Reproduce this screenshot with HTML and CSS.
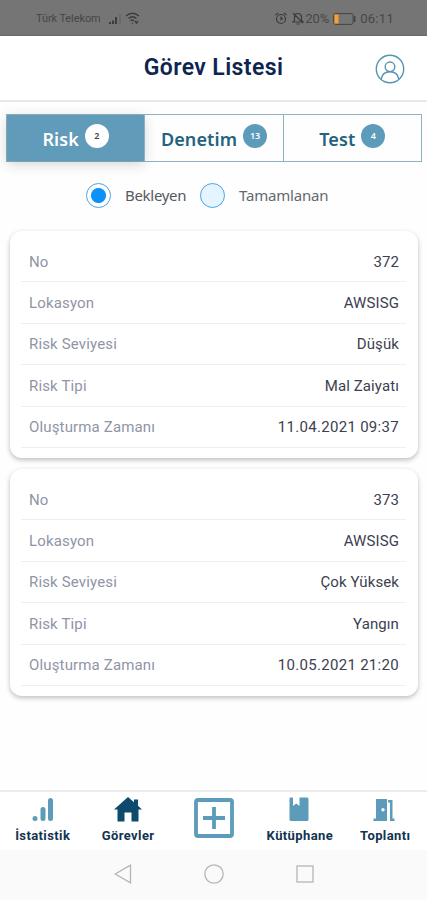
FILE: index.html
```html
<!DOCTYPE html>
<html lang="tr">
<head>
    <meta charset="UTF-8">
    <meta name="viewport" content="width=device-width, initial-scale=1.0">
    <title>Görev Listesi</title>
    <link rel="stylesheet" href="styles.css">
</head>
<body>
    <div class="status-bar">
        <span class="carrier">Türk Telekom</span>
        <svg class="signal" width="13" height="12" viewBox="0 0 13 12">
            <path d="M1 11V9M4 11V7.500M7 11V4" stroke="#3c3c3c" stroke-width="2"/>
            <path d="M11 11V1" stroke="#666" stroke-width="1.500"/>
        </svg>
        <svg class="wifi" width="15" height="13" viewBox="0 0 15 13" fill="none" stroke="#3c3c3c" stroke-width="1.400">
            <path d="M1 4Q7.500-1.500 14 4M3.500 6.500Q7.500 3 11.500 6.500M5.500 9Q7.500 7 9 9"/>
            <path d="M7 11.500h1M10 9l1.500 2L13 9" />
        </svg>
        <svg class="alarm" width="12" height="13" viewBox="0 0 12 13" fill="none" stroke="#3c3c3c" stroke-width="1.200">
            <circle cx="6" cy="7" r="4.500"/>
            <path d="M.500 3L3 1M11.500 3L9 1M6 4.500V7.500L8 6"/>
        </svg>
        <svg class="mute" width="12" height="13" viewBox="0 0 12 13" fill="none" stroke="#3c3c3c" stroke-width="1.200">
            <path d="M1 10h10L9.500 8V5a3.500 3.500 0 0 0-7 0v3zM4.500 12h3M1 1l10 10"/>
        </svg>
        <span class="percent">20%</span>
        <svg class="battery" width="23" height="12" viewBox="0 0 23 12">
            <rect x=".600" y=".600" width="19.500" height="10.800" rx="2" fill="none" stroke="#444" stroke-width="1"/>
            <rect x="1.500" y="1.500" width="4" height="9" fill="#f6a032"/>
            <path d="M21.700 3v6" stroke="#444" stroke-width="1.500"/>
        </svg>
        <span class="clock">06:11</span>
    </div>

    <header>
        <h1>Görev Listesi</h1>
        <svg class="profile" width="30" height="30" viewBox="0 0 30 30" fill="none" stroke="#5594b2" stroke-width="1.400">
            <circle cx="15" cy="15" r="13.700"/>
            <circle cx="15" cy="12.800" r="4.800"/>
            <path d="M6.200 25.200C7 20 10 17.800 15 17.800S23 20 23.800 25.200"/>
        </svg>
    </header>

    <nav class="tabs">
        <a class="tab active">Risk<span class="badge">2</span></a>
        <a class="tab">Denetim<span class="badge">13</span></a>
        <a class="tab">Test<span class="badge">4</span></a>
    </nav>

    <div class="filters">
        <span class="radio checked"></span>
        <span class="filter-label">Bekleyen</span>
        <span class="radio"></span>
        <span class="filter-label done">Tamamlanan</span>
    </div>

    <main>
        <section class="card">
            <div class="row"><span class="label">No</span><span class="value">372</span></div>
            <div class="row"><span class="label">Lokasyon</span><span class="value">AWSISG</span></div>
            <div class="row"><span class="label">Risk Seviyesi</span><span class="value">Düşük</span></div>
            <div class="row"><span class="label">Risk Tipi</span><span class="value">Mal Zaiyatı</span></div>
            <div class="row"><span class="label">Oluşturma Zamanı</span><span class="value date">11.04.2021 09:37</span></div>
        </section>
        <section class="card">
            <div class="row"><span class="label">No</span><span class="value">373</span></div>
            <div class="row"><span class="label">Lokasyon</span><span class="value">AWSISG</span></div>
            <div class="row"><span class="label">Risk Seviyesi</span><span class="value">Çok Yüksek</span></div>
            <div class="row"><span class="label">Risk Tipi</span><span class="value">Yangın</span></div>
            <div class="row"><span class="label">Oluşturma Zamanı</span><span class="value date">10.05.2021 21:20</span></div>
        </section>
    </main>

    <nav class="bottom-nav">
        <a class="item">
            <svg width="26" height="26" viewBox="0 0 26 26" fill="none" stroke="#5c9bba" stroke-width="5" stroke-linecap="round">
                <path d="M5 21.500V21.600M13 21.500V12.500M20.500 21.500V3.500"/>
            </svg>
            <span>İstatistik</span>
        </a>
        <a class="item">
            <svg width="28" height="26" viewBox="0 0 28 26" fill="#0d4a6b">
                <path d="M14 0L20 5.300V2.500H24V8.800L28 12.500H24.500V24.500H17.500V15.500H10.500V24.500H3.500V12.500H0z"/>
            </svg>
            <span>Görevler</span>
        </a>
        <a class="item add">
            <svg width="40" height="40" viewBox="0 0 40 40" fill="none" stroke="#5c9bba">
                <rect x="2" y="2" width="36" height="36" rx="2" stroke-width="3.800"/>
                <path d="M20 9V31M9 20H31" stroke-width="3.800"/>
            </svg>
        </a>
        <a class="item">
            <svg width="20" height="26" viewBox="0 0 20 26" fill="#5c9bba">
                <path d="M1.500 .500H4V9L7.200 6.500L10.500 9V.500H18Q19.500 .500 19.500 2V22.500Q19.500 24 18 24H2Q.500 24 .500 22.500V1.500Q.500 .500 1.500 .500z"/>
            </svg>
            <span class="wide">Kütüphane</span>
        </a>
        <a class="item">
            <svg width="22" height="26" viewBox="0 0 22 26" fill="#5c9bba">
                <path fill-rule="evenodd" d="M3 2H14V24H.500V21.500H3zM10 11A1.700 1.700 0 1 0 10 14.400A1.700 1.700 0 1 0 10 11z"/>
                <path d="M15 3H19.500V21.500H21.500V24H17V5.500H15z"/>
            </svg>
            <span class="wide">Toplantı</span>
        </a>
    </nav>

    <div class="system-nav">
        <svg width="18" height="20" viewBox="0 0 18 20"><path d="M16.500 1.200V18.800L1.200 10z"/></svg>
        <svg width="20" height="20" viewBox="0 0 20 20"><circle cx="10" cy="10" r="9.200"/></svg>
        <svg width="18" height="20" viewBox="0 0 18 20"><rect x="1" y="2" width="16" height="16"/></svg>
    </div>
</body>
</html>
```

FILE: styles.css
```css
/* Global Styles */
* {
    box-sizing: border-box;
}

body {
    font-family: Roboto, "Liberation Sans", sans-serif;
    margin: 0;
    height: 900px;
    display: flex;
    flex-direction: column;
    background-color: #fefefe;
    overflow: hidden;
}

svg {
    display: block;
    flex: none;
}

/* Status Bar */
.status-bar {
    height: 36px;
    flex: none;
    display: flex;
    align-items: center;
    padding: 2px 33px 0 36px;
    background-color: #757575;
    border-bottom: 1px solid #686868;
    color: #464646;
    font-size: 13px;
}

.carrier {
    width: 64px;
    font-size: 11px;
    letter-spacing: -0.1px;
    white-space: nowrap;
}

.signal {
    margin-left: 9px;
}

.wifi {
    margin-left: 3px;
}

.alarm {
    margin-left: auto;
}

.mute {
    margin: 0 2px 0 5px;
}

.percent {
    width: 28px;
    margin-left: -1px;
}

.battery {
    margin-right: 4px;
}

.clock {
    letter-spacing: 0.3px;
}

/* Header Styles */
header {
    height: 66px;
    flex: none;
    display: grid;
    grid-template-columns: 1fr auto 1fr;
    align-items: center;
    padding: 0 22px;
    background-color: #fff;
    border-bottom: 2px solid #e8e9ea;
}

h1 {
    grid-column: 2;
    margin: 0 0 2px;
    color: #0d2550;
    font-size: 23px;
    font-weight: 600;
    letter-spacing: 0.4px;
}

.profile {
    justify-self: end;
    margin-top: 2px;
}

/* Tabs */
.tabs {
    height: 48px;
    flex: none;
    display: flex;
    margin: 12px 5px 0 6px;
    border: 1px solid #8fb2bf;
    font-family: "Noto Sans", sans-serif;
    font-size: 18px;
    font-weight: 600;
    color: #24637f;
}

.tab {
    flex: 1;
    display: flex;
    align-items: center;
    justify-content: center;
    gap: 6px;
    padding-top: 1px;
    letter-spacing: 0.1px;
}

.tab + .tab {
    border-left: 1px solid #8fb2bf;
}

.tab.active {
    background-color: #609bb9;
    color: #fff;
    box-shadow: 0 3px 12px rgba(40, 40, 60, 0.2);
}

.badge {
    width: 24px;
    height: 24px;
    margin-bottom: 6px;
    border-radius: 50%;
    background-color: #5c9bba;
    color: #fff;
    font-size: 9px;
    line-height: 24px;
    text-align: center;
    letter-spacing: 0;
}

.active .badge {
    background-color: #fff;
    color: #444;
}

/* Filters */
.filters {
    height: 24px;
    flex: none;
    display: flex;
    align-items: center;
    margin: 21px 0 0 86px;
    font-family: "Noto Sans", sans-serif;
    font-size: 15px;
    color: #555960;
}

.radio {
    width: 25px;
    height: 25px;
    border: 1px solid #4aa3e8;
    border-radius: 50%;
    background-color: #e5f5ff;
}

.radio.checked {
    background: radial-gradient(circle, #0a91fa 7px, #fff 8px);
}

.filter-label {
    width: 62px;
    margin: 0 13px 0 14px;
    letter-spacing: -0.3px;
}

.filter-label.done {
    width: auto;
    color: #65686e;
    letter-spacing: -0.2px;
}

/* Cards */
main {
    flex: 1;
    padding: 24px 9px 0 10px;
}

.card {
    height: 227px;
    margin-bottom: 11px;
    padding: 10px 12px 0 11px;
    border-radius: 12px;
    background-color: #fff;
    box-shadow: 0 2px 5px rgba(0, 0, 0, 0.26);
}

.row {
    height: 41.400px;
    display: flex;
    align-items: center;
    justify-content: space-between;
    padding: 1px 7px 0 8px;
    border-bottom: 1px solid #efeff0;
    font-size: 15px;
}

.label {
    color: #9194a6;
    letter-spacing: 0.15px;
}

.value {
    color: #3d4050;
    letter-spacing: 0.1px;
}

.value.date {
    letter-spacing: 0.3px;
}

/* Bottom Navigation */
.bottom-nav {
    height: 60px;
    flex: none;
    display: grid;
    grid-template-columns: repeat(5, 1fr);
    background-color: #fff;
    border-top: 2px solid #ececec;
}

.item {
    display: flex;
    flex-direction: column;
    align-items: center;
    padding-top: 5px;
    color: #123450;
    font-size: 13px;
    font-weight: 700;
    letter-spacing: 0.4px;
}

.item.add {
    padding: 6px 0 0 1px;
}

.item span {
    margin-top: 5px;
    line-height: 16px;
}

.item .wide {
    padding-left: 2px;
}

/* System Navigation */
.system-nav {
    height: 50px;
    flex: none;
    display: flex;
    align-items: center;
    justify-content: center;
    gap: 72px;
    padding-bottom: 2px;
    background-color: #fafafa;
    fill: none;
    stroke: #b5b5b5;
    stroke-width: 1.300;
}
```
